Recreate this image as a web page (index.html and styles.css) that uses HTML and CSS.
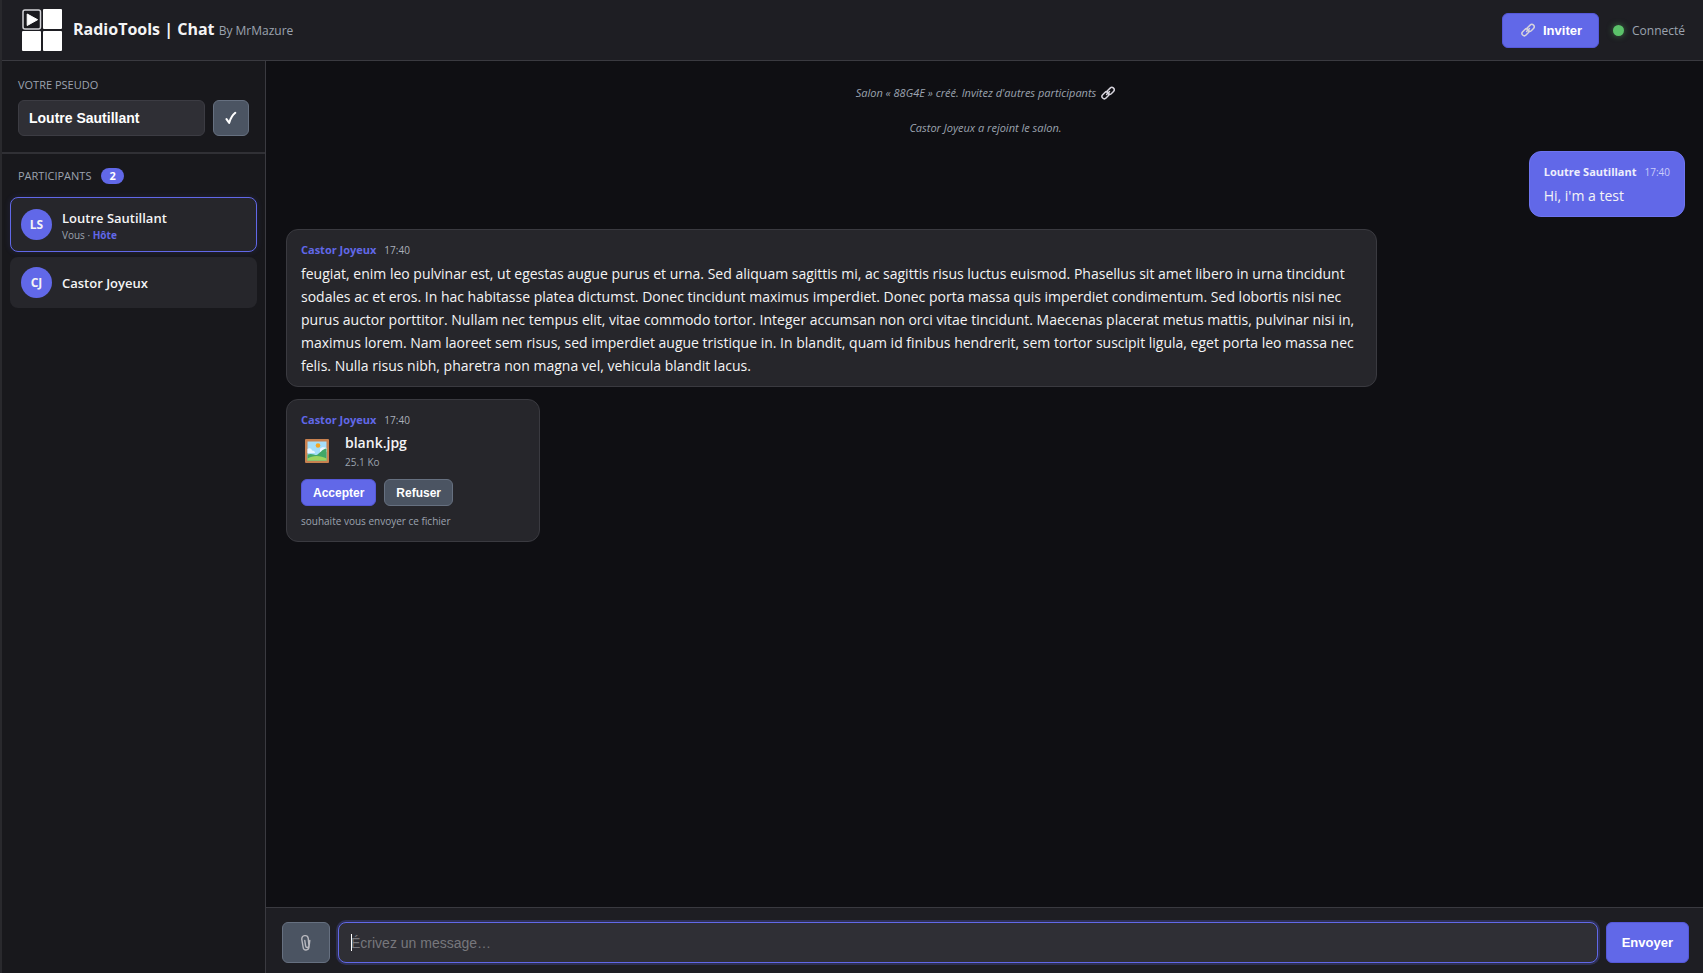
FILE: index.html
```
<!DOCTYPE html>
<html lang="fr">
<head>
	<meta charset="UTF-8">
	<meta name="viewport" content="width=device-width, initial-scale=1">
	<title>RadioTools | Chat</title>
	<link rel="stylesheet" href="styles.css">
</head>
<body>

	<svg class="sprite" aria-hidden="true">
		<symbol id="icon-link" viewBox="0 0 16 16">
			<g fill="none" stroke="currentColor" stroke-width="1.7">
				<rect x="6.6" y="2.9" width="9" height="5.4" rx="2.7" transform="rotate(-45 11.1 5.6)"/>
				<rect x="0.6" y="7.9" width="9" height="5.4" rx="2.7" transform="rotate(-45 5.1 10.6)"/>
			</g>
			<path d="M6.3 9.8 9.8 6.3" stroke="currentColor" stroke-width="1.5" stroke-linecap="round"/>
		</symbol>
	</svg>

	<header class="topbar">
		<svg class="logo" viewBox="0 0 40 42" aria-hidden="true">
			<rect x="1" y="1" width="17.5" height="19" rx="2" fill="#1a1a1e" stroke="#d4d4d8" stroke-width="1.5"/>
			<path d="M5.2 5v11.5L15.6 10.700z" fill="#fff" stroke="#fff" stroke-linejoin="round"/>
			<rect x="21" y="0" width="19" height="20" rx="1" fill="#fff"/>
			<rect x="0" y="22" width="19" height="20" rx="1" fill="#fff"/>
			<rect x="21" y="22" width="19" height="20" rx="1" fill="#fff"/>
		</svg>
		<h1 class="brand">RadioTools | Chat <small>By MrMazure</small></h1>
		<div class="topbar-right">
			<button class="btn btn-primary btn-invite" type="button">
				<svg class="icon-link" aria-hidden="true"><use href="#icon-link"/></svg>
				Inviter
			</button>
			<p class="status"><span class="dot"></span>Connecté</p>
		</div>
	</header>

	<div class="layout">
		<aside class="sidebar">
			<form class="pseudo">
				<label class="label" for="pseudo">Votre pseudo</label>
				<div class="pseudo-row">
					<input class="field" type="text" id="pseudo" value="Loutre Sautillant">
					<button class="btn btn-grey btn-check" type="button" aria-label="Valider">
						<svg viewBox="0 0 12 14" aria-hidden="true"><path d="M1.500 8.200 4.200 11.800C5.400 7.500 7.200 4.300 10.300 1.800" fill="none" stroke="#fff" stroke-width="2.100" stroke-linejoin="round" stroke-linecap="round"/></svg>
					</button>
				</div>
			</form>
			<section class="people">
				<h2 class="label">Participants <span class="count">2</span></h2>
				<ul class="people-list">
					<li class="person me">
						<span class="avatar">LS</span>
						<div>
							<p class="person-name">Loutre Sautillant</p>
							<p class="person-role">Vous · <strong>Hôte</strong></p>
						</div>
					</li>
					<li class="person">
						<span class="avatar">CJ</span>
						<p class="person-name">Castor Joyeux</p>
					</li>
				</ul>
			</section>
		</aside>

		<main class="chat">
			<div class="messages">
				<p class="system">Salon « 88G4E » créé. Invitez d'autres participants <svg class="icon-link" aria-hidden="true"><use href="#icon-link"/></svg></p>
				<p class="system">Castor Joyeux a rejoint le salon.</p>

				<article class="message mine">
					<p class="meta"><strong>Loutre Sautillant</strong> <time>17:40</time></p>
					<p class="text">Hi, i'm a test</p>
				</article>

				<article class="message">
					<p class="meta"><strong>Castor Joyeux</strong> <time>17:40</time></p>
					<p class="text">feugiat, enim leo pulvinar est, ut egestas augue purus et urna. Sed aliquam sagittis mi, ac sagittis risus luctus euismod. Phasellus sit amet libero in urna tincidunt sodales ac et eros. In hac habitasse platea dictumst. Donec tincidunt maximus imperdiet. Donec porta massa quis imperdiet condimentum. Sed lobortis nisi nec purus auctor porttitor. Nullam nec tempus elit, vitae commodo tortor. Integer accumsan non orci vitae tincidunt. Maecenas placerat metus mattis, pulvinar nisi in, maximus lorem. Nam laoreet sem risus, sed imperdiet augue tristique in. In blandit, quam id finibus hendrerit, sem tortor suscipit ligula, eget porta leo massa nec felis. Nulla risus nibh, pharetra non magna vel, vehicula blandit lacus.</p>
				</article>

				<article class="message file">
					<p class="meta"><strong>Castor Joyeux</strong> <time>17:40</time></p>
					<div class="file-info">
						<svg class="file-icon" viewBox="0 0 24 24" aria-hidden="true">
							<rect width="24" height="24" rx="1" fill="#c8814f"/>
							<rect x="2.500" y="2.500" width="19" height="19" fill="#a5defa"/>
							<circle cx="13" cy="6.500" r="2.300" fill="#f5a623"/>
							<path d="M2.500 10c2-1.500 4-.5 4.500 1.500 2 0 3 1 3 2.500H2.500zM15 10c1-2 4-2 6.500-1v4H15z" fill="#e9f7ff"/>
							<path d="M2.500 15.500c4-1.500 7 .5 9 .5 3-1 6-6.500 10-6.500v12h-19z" fill="#43a867"/>
							<path d="M2.500 19.500c5-3.500 13-3.500 19 0v2h-19z" fill="#9bd45f"/>
						</svg>
						<div>
							<p class="file-name">blank.jpg</p>
							<p class="file-size">25.1 Ko</p>
						</div>
					</div>
					<div class="file-actions">
						<button class="btn btn-primary btn-small" type="button">Accepter</button>
						<button class="btn btn-grey btn-small" type="button">Refuser</button>
					</div>
					<p class="file-note">souhaite vous envoyer ce fichier</p>
				</article>
			</div>

			<form class="composer">
				<button class="btn btn-grey btn-attach" type="button" aria-label="Joindre un fichier">
					<svg viewBox="0 0 12 18" aria-hidden="true"><path d="M9.800 6.500 9 13c-.4 4-5.500 3.800-5.800.5L1.800 5.500C1.500 1 7.500.2 8.200 4.200l.7 7.300c0 2.500-3 2.600-3.300.3L4.800 6.500" fill="none" stroke="#b9b9bf" stroke-width="1.400" stroke-linecap="round"/></svg>
				</button>
				<div class="composer-box">
					<input class="field composer-input" type="text" placeholder="Écrivez un message…" aria-label="Message">
					<span class="caret"></span>
				</div>
				<button class="btn btn-primary btn-send" type="button">Envoyer</button>
			</form>
		</main>
	</div>

</body>
</html>
```
FILE: styles.css
```
* {
	box-sizing: border-box;
}
body {
	margin: 0;
	height: 100vh;
	display: flex;
	flex-direction: column;
	border-left: 2px solid #29292d;
	background-color: #0f0f13;
	color: #f4f4f5;
	font-family: "Segoe UI", "Open Sans", "Noto Sans", sans-serif;
	font-size: 14px;
	line-height: 23px;
}
h1, h2, p, ul {
	margin: 0;
	padding: 0;
}
.sprite {
	position: absolute;
	width: 0;
	height: 0;
}
.icon-link {
	width: 14px;
	height: 14px;
	color: #d6d3dc;
}

/* Buttons and fields */
.btn {
	display: inline-flex;
	align-items: center;
	justify-content: center;
	border: 1px solid #5558d8;
	border-radius: 6px;
	color: #fff;
	font-family: Arial, "Liberation Sans", sans-serif;
	font-size: 13px;
	font-weight: bold;
	cursor: pointer;
}
.btn-primary {
	background-color: #6168e8;
}
.btn-grey {
	background-color: #4b5462;
	border-color: #667080;
}
.field {
	min-width: 0;
	border: 1px solid #3c3c43;
	border-radius: 6px;
	background-color: #2f2f35;
	color: #fff;
	font-family: Arial, "Liberation Sans", sans-serif;
	font-size: 14px;
	outline: none;
}

/* Top bar */
.topbar {
	display: flex;
	align-items: center;
	height: 61px;
	padding: 0 18px 0 20px;
	border-bottom: 1px solid #3a3a40;
	background-color: #1e1e23;
}
.logo {
	width: 40px;
	height: 42px;
	margin-right: 11px;
}
.brand {
	font-size: 16px;
	font-weight: bold;
}
.brand small {
	color: #9ca3af;
	font-size: 12px;
	font-weight: normal;
}
.topbar-right {
	display: flex;
	align-items: center;
	gap: 14px;
	margin-left: auto;
}
.btn-invite {
	gap: 8px;
	height: 35px;
	padding: 0 16px 0 18px;
}
.status {
	display: flex;
	align-items: center;
	gap: 8px;
	color: #9ca3af;
	font-size: 12px;
}
.dot {
	width: 11px;
	height: 11px;
	border-radius: 50%;
	background-color: #5bc26a;
	box-shadow: 0 0 6px rgba(91, 194, 106, 0.5);
}

/* Sidebar */
.layout {
	flex: 1;
	display: flex;
	min-height: 0;
}
.sidebar {
	flex: 0 0 264px;
	min-width: 0;
	border-right: 1px solid #3a3a40;
	background-color: #18181c;
}
.label {
	display: flex;
	align-items: center;
	gap: 10px;
	color: #9ca3af;
	font-size: 11px;
	font-weight: normal;
	line-height: 16px;
	text-transform: uppercase;
}
.pseudo {
	padding: 16px;
	border-bottom: 2px solid #303035;
}
.pseudo-row {
	display: flex;
	gap: 8px;
	margin-top: 7px;
}
.pseudo-row .field {
	flex: 1;
	height: 36px;
	padding: 0 10px;
	font-weight: bold;
}
.btn-check {
	flex: 0 0 36px;
	padding: 0;
}
.btn-check svg {
	width: 12px;
	height: 14px;
}
.people {
	padding: 14px 8px;
}
.people .label {
	padding: 0 8px;
}
.count {
	padding: 0 8px;
	border-radius: 9px;
	background-color: #6168e8;
	color: #fff;
	font-weight: bold;
}
.people-list {
	display: flex;
	flex-direction: column;
	gap: 5px;
	margin-top: 13px;
	list-style: none;
}
.person {
	display: flex;
	align-items: center;
	gap: 10px;
	min-height: 51px;
	padding: 9px 10px;
	border: 1px solid transparent;
	border-radius: 8px;
	background-color: #26262b;
}
.person.me {
	min-height: 55px;
	border-color: #6168e8;
	box-shadow: 0 0 6px rgba(97, 104, 232, 0.15);
}
.avatar {
	display: flex;
	align-items: center;
	justify-content: center;
	width: 31px;
	height: 31px;
	border-radius: 50%;
	background-color: #6168e8;
	font-size: 12px;
	font-weight: bold;
}
.person-name {
	font-size: 13px;
	font-weight: 600;
	line-height: 20px;
}
.person-role {
	color: #9ca3af;
	font-size: 10px;
	line-height: 14px;
}
.person-role strong {
	color: #6168e8;
}

/* Messages */
.chat {
	flex: 1;
	display: flex;
	flex-direction: column;
	min-width: 0;
}
.messages {
	flex: 1;
	display: flex;
	flex-direction: column;
	align-items: flex-start;
	gap: 12px;
	min-height: 0;
	padding: 20px 18px 20px 20px;
	overflow: auto;
}
.system {
	align-self: center;
	display: flex;
	align-items: center;
	gap: 5px;
	color: #9ca3af;
	font-size: 11px;
	font-style: italic;
}
.message {
	max-width: 78%;
	padding: 10px 14px 9px;
	border: 1px solid #3a3a40;
	border-radius: 12px;
	background-color: #26262b;
}
.message.mine {
	align-self: flex-end;
	border-color: #6e74f0;
	background-color: #6168e8;
}
.meta {
	display: flex;
	align-items: center;
	gap: 8px;
	margin-bottom: 2px;
	color: #a9afb9;
	font-size: 11px;
	line-height: 20px;
}
.meta strong {
	color: #6168e8;
}
.meta time {
	font-size: 10px;
}
.mine .meta,
.mine .meta strong {
	color: #eeeefc;
}
.mine .meta time {
	color: #c9cbfa;
}
.file {
	width: 254px;
}
.file-info {
	display: flex;
	align-items: center;
	gap: 16px;
	padding-left: 4px;
}
.file-icon {
	width: 24px;
	height: 24px;
}
.file-name {
	font-weight: 600;
	line-height: 22px;
}
.file-size {
	color: #9ca3af;
	font-size: 10px;
	line-height: 16px;
}
.file-actions {
	display: flex;
	gap: 8px;
	margin-top: 9px;
}
.btn-small {
	height: 27px;
	padding: 0 11px;
	font-size: 12px;
}
.file-note {
	margin-top: 4px;
	color: #9ca3af;
	font-size: 10px;
	line-height: 22px;
}

/* Composer */
.composer {
	display: flex;
	gap: 8px;
	padding: 14px 14px 10px 16px;
	border-top: 1px solid #3a3a40;
	background-color: #1e1e23;
}
.btn-attach {
	width: 48px;
	padding: 0;
}
.btn-attach svg {
	width: 12px;
	height: 18px;
}
.composer-box {
	flex: 1;
	position: relative;
}
.composer-input {
	display: block;
	width: 100%;
	height: 41px;
	padding: 0 12px;
	border-color: #6168e8;
	border-radius: 8px;
	box-shadow: 0 0 0 2px rgba(97, 104, 232, 0.25);
}
.composer-input::placeholder {
	color: #77777c;
}
.caret {
	position: absolute;
	top: 12px;
	left: 13px;
	width: 1px;
	height: 17px;
	background-color: #fff;
}
.btn-send {
	padding: 0 15px;
}
```
